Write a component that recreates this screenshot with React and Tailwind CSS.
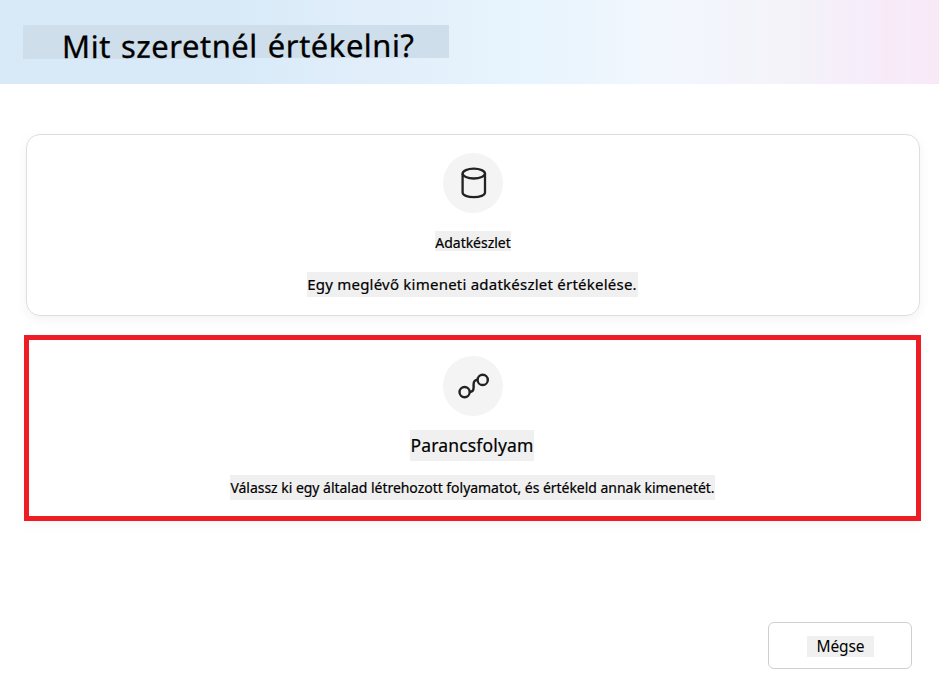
function IconDisc({ children }) {
  return (
    <div className="flex size-[60px] items-center justify-center rounded-full bg-[#f4f4f4]">
      {children}
    </div>
  );
}

function DatabaseIcon() {
  return (
    <svg width="60" height="60" viewBox="0 0 60 60" fill="none" stroke="#222" strokeWidth="2.3">
      <ellipse cx="30.8" cy="20.6" rx="11.2" ry="4.9" />
      <path d="M19.6 20.6V39.4C19.6 42.2 24.6 44.2 30.8 44.2S42 42.2 42 39.4V20.6" />
    </svg>
  );
}

function FlowIcon() {
  return (
    <svg width="60" height="60" viewBox="0 0 60 60" fill="none" stroke="#222" strokeWidth="2.4">
      <circle cx="21.6" cy="36.1" r="5.1" />
      <circle cx="39.7" cy="23.9" r="5.1" />
      <path d="M26.7 36C29.4 36 30.6 34.5 30.6 31.6V28.4C30.6 25.4 32 23.9 34.6 23.9" />
    </svg>
  );
}

export default function App() {
  return (
    <div className="flex h-[679px] w-[939px] flex-col overflow-hidden bg-white font-['Noto_Sans',sans-serif] text-black">
      <header className="h-[84px] shrink-0 bg-[linear-gradient(90deg,#d8eaf8_0px,#d8eaf8_240px,#dfedfa_320px,#e5f1fb_460px,#e8f4fe_530px,#ecf5fd_590px,#f2f7fe_645px,#f3f5fc_710px,#f4f3f9_790px,#f5effa_840px,#f6edfa_870px,#f8eaf6_889px,#f8ebfa_908px,#f8e9f5_939px)] pt-[25px] pl-[23px]">
        <div className="h-[34px] w-[426px] bg-[#cfdeeb] pl-[39px] [clip-path:polygon(0_0,100%_0,100%_33px,50%_33px,50%_34px,0_34px)]">
          <h1 className="origin-left -rotate-[0.2deg] text-[31px] leading-[43px] font-normal tracking-[0.5px] [word-spacing:1.5px] whitespace-nowrap [-webkit-text-stroke:0.3px_black]">
            Mit szeretnél értékelni?
          </h1>
        </div>
      </header>

      <main className="flex flex-col pt-[50px]">
        <section className="ml-[26px] flex h-[182px] w-[894px] flex-col items-center rounded-[14px] border border-[#dedede] pt-[18px] shadow-[0_4px_12px_rgba(0,0,0,0.05)]">
          <IconDisc>
            <DatabaseIcon />
          </IconDisc>
          <h2 className="mt-[18px] flex h-5 w-[76px] justify-center bg-[#f0f0f0] text-[14px] leading-[23px] font-normal tracking-[-0.03px] whitespace-nowrap [-webkit-text-stroke:0.2px_black]">
            Adatkészlet
          </h2>
          <p className="mt-[21px] mr-0.5 flex h-[25px] w-[331px] justify-center bg-[#f0f0f0] text-[15px] leading-[25px] tracking-[0.23px] whitespace-nowrap [-webkit-text-stroke:0.2px_black]">
            Egy meglévő kimeneti adatkészlet értékelése.
          </p>
        </section>

        <section className="mt-[19px] ml-6 flex h-[186px] w-[897px] flex-col items-center border-[5px] border-[#ee1c25] pt-4 shadow-[0_4px_12px_rgba(0,0,0,0.04)]">
          <IconDisc>
            <FlowIcon />
          </IconDisc>
          <h2 className="mt-[14px] mr-px flex h-[31px] w-[124px] justify-center bg-[#f0f0f0] text-[17.5px] leading-[31px] font-normal tracking-[0.15px] whitespace-nowrap [-webkit-text-stroke:0.2px_black]">
            Parancsfolyam
          </h2>
          <p className="mt-[14px] flex h-[25px] w-[485px] justify-center bg-[#f0f0f0] text-[14px] leading-[25px] tracking-[-0.03px] whitespace-nowrap [-webkit-text-stroke:0.2px_black]">
            Válassz ki egy általad létrehozott folyamatot, és értékeld annak kimenetét.
          </p>
        </section>
      </main>

      <footer className="mt-[101px] flex justify-end pr-[27px]">
        <button className="flex h-[47px] w-[144px] items-start justify-center rounded-[6px] border border-[#cfcfcf] bg-white pt-[13px]">
          <span className="ml-px h-[21px] w-[67px] bg-[#f0f0f0] text-center text-[15.5px] leading-[21px] tracking-[-0.1px]">Mégse</span>
        </button>
      </footer>
    </div>
  );
}
